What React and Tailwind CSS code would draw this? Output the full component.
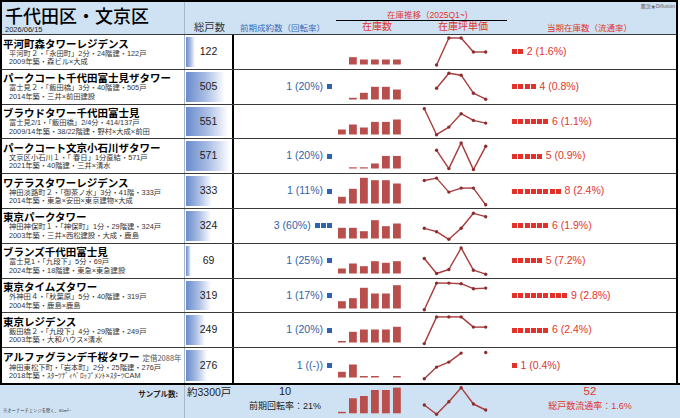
import React from 'react';

const F = "font-['Liberation_Sans','Noto_Sans_CJK_JP',sans-serif]";

const rows = [
  { name: '平河町森タワーレジデンス', l1: '平河町２・「永田町」2分・24階建・122戸', l2: '2009年築・森ビル×大成', total: 122, sold: null, bars: [null, 7.3, 5, 5, 5, 5], line: [null, 30, 3, 3, 17, 17], cur: 2, pct: '1.6%' },
  { name: 'パークコート千代田富士見ザタワー', l1: '富士見２・「飯田橋」3分・40階建・505戸', l2: '2014年築・三井×前田建設', total: 505, sold: ['1 (20%)', 1], bars: [null, 1.7, 6.7, 12.7, 12.7, 10], line: [null, 18.2, 3.2, 5.2, 23.2, 29.2], cur: 4, pct: '0.8%' },
  { name: 'ブラウドタワー千代田富士見', l1: '富士見2/1・「飯田橋」2/4分・414/137戸', l2: '2009/14年築・38/22階建・野村×大成×前田', total: 551, sold: null, bars: [5, 10, 7, 12.6, 12.6, 15], line: [3.7, 29.7, 22.1, 8.7, 15.4, 18.1], cur: 6, pct: '1.1%' },
  { name: 'パークコート文京小石川ザタワー', l1: '文京区小石川１・「 春日」1分直結・571戸', l2: '2021年築・40階建・三井×清水', total: 571, sold: ['1 (20%)', 1], bars: [null, 1.2, 1.2, 5, 12.6, 12.6], line: [null, 11.3, 29.6, 3.9, 30.6, 7.3], cur: 5, pct: '0.9%' },
  { name: 'ワテラスタワーレジデンス', l1: '神田淡路町２・「御茶ノ水」3分・41階・333戸', l2: '2014年築・東急×安田×東京建物×大成', total: 333, sold: ['1 (11%)', 1], bars: [6.7, 14.7, 25.7, 23.3, 23.3, 20], line: [6.5, 4.1, 18.1, 14.1, 14.1, 30.8], cur: 8, pct: '2.4%' },
  { name: '東京パークタワー', l1: '神田神保町１・「神保町」1分・29階建・324戸', l2: '2003年築・三井×西松建設・大成・鹿島', total: 324, sold: ['3 (60%)', 3], bars: [10.7, 10.7, 7.3, 18.3, 12.3, 15], line: [19.3, 22.7, 30.3, 19.3, 4.3, 7.7], cur: 6, pct: '1.9%' },
  { name: 'ブランズ千代田富士見', l1: '富士見1・「九段下」5分・69戸', l2: '2024年築・18階建・東急×東急建設', total: 69, sold: ['1 (25%)', 1], bars: [5, 10, 7.3, 12.3, 10.7, 12.3], line: [14.5, 29.5, 25.5, 3.9, 26.2, 30.2], cur: 5, pct: '7.2%' },
  { name: '東京タイムズタワー', l1: '外神田４・「秋葉原」5分・40階建・319戸', l2: '2004年築・鹿島×鹿島', total: 319, sold: ['1 (17%)', 1], bars: [7.3, 10.3, 20.7, 15, 15, 23.3], line: [30.7, 4.1, 4.1, 4.7, 9.7, 9.1], cur: 9, pct: '2.8%' },
  { name: '東京レジデンス', l1: '飯田橋２・「九段下」4分・29階建・249戸', l2: '2003年築・大和ハウス×清水', total: 249, sold: ['1 (20%)', 1], bars: [1.5, 10.7, 13, 13, 13, 15.7], line: [30.6, 3.9, 3.9, 3.9, 14.1, 14.1], cur: 6, pct: '2.4%' },
  { name: 'アルファグランデ千桜タワー', extra: '定借2088年', l1: '神田東松下町・「岩本町」2分・25階建・276戸', l2: '2018年築・ｽﾀｰﾂﾃﾞｨﾍﾞﾛｯﾌﾟﾒﾝﾄ×ｽﾀｰﾂCAM', total: 276, sold: ['1 ((-))', 1], bars: [5.7, 13, 1.5, 1.5, null, 1.5], line: [30.8, 19.1, 14.1, 5.1, null, 4.5], cur: 1, pct: '0.4%' },
];

function Bars({ data, base, h }) {
  return (
    <svg width="74" height={h} className="block">
      {data.map((v, i) =>
        v == null ? null : (
          <rect key={i} x={2 + i * 11} y={base - v} width="7.8" height={v} fill="#b94f4c" />
        )
      )}
    </svg>
  );
}

function Line({ data, h }) {
  const xs = data.map((_, i) => 14.3 + i * 12.28);
  const segs = [];
  for (let i = 0; i < data.length - 1; i++) {
    if (data[i] != null && data[i + 1] != null) {
      segs.push(<line key={'l' + i} x1={xs[i]} y1={data[i]} x2={xs[i + 1]} y2={data[i + 1]} stroke="#a83c3c" strokeWidth="1.4" />);
    }
  }
  return (
    <svg width="90" height={h} className="block">
      {segs}
      {data.map((v, i) => (v == null ? null : <circle key={i} cx={xs[i]} cy={v} r="1.7" fill="#8c2e2e" />))}
    </svg>
  );
}

function Squares({ n, color, gap }) {
  return (
    <div className={`flex ${gap}`}>
      {Array.from({ length: n }).map((_, i) => (
        <div key={i} className={`w-[5px] h-[5px] ${color}`} />
      ))}
    </div>
  );
}

function Row({ r, last }) {
  return (
    <div className={`flex h-[34.8px] ${last ? '' : 'border-b border-[#3a3a3a]'}`}>
      <div className="w-[182px] pl-[1px] pt-[1.5px] overflow-hidden">
        <div className="flex items-baseline font-['Noto_Sans_CJK_JP',sans-serif] font-bold text-[10.5px] leading-[13px] text-black whitespace-nowrap">
          {r.name}
          {r.extra && <span className="ml-[3px] text-[7.5px] font-normal text-[#555]">{r.extra}</span>}
        </div>
        <div className={`${F} pl-[6px] text-[7.3px] leading-[8.5px] text-[#333] whitespace-nowrap`}>{r.l1}</div>
        <div className={`${F} pl-[6px] text-[7.3px] leading-[8.5px] text-[#333] whitespace-nowrap`}>{r.l2}</div>
      </div>
      <div className="relative w-[50px] border-l border-r-2 border-l-[#a9b6c8] border-r-black">
        <div
          className="absolute left-[1px] top-[2px] bottom-[2px] bg-gradient-to-r from-[#6a8bcb] via-[#a9bde4] to-white"
          style={{ width: `${(r.total / 571) * 44}px` }}
        />
        <div className={`relative flex h-full items-center justify-center ${F} text-[10.5px] text-[#222]`}>{r.total}</div>
      </div>
      <div className={`w-[102px] flex items-center justify-end gap-[4px] pr-[4px] ${F} text-[10.5px] text-[#2f5fa8]`}>
        {r.sold && (
          <>
            <span>{r.sold[0]}</span>
            <Squares n={r.sold[1]} color="bg-[#2f62b2]" gap="gap-[1.2px]" />
          </>
        )}
      </div>
      <div className="w-[74px]">
        <Bars data={r.bars} base={29.5} h={33.8} />
      </div>
      <div className="w-[90px]">
        <Line data={r.line} h={33.8} />
      </div>
      <div className={`flex-1 flex items-center pl-[12px] ${F} text-[10.5px] text-[#e0352d]`}>
        <Squares n={r.cur} color="bg-[#e2312b]" gap="gap-[1.3px]" />
        <span className="ml-[3.5px]">
          {r.cur} ({r.pct})
        </span>
      </div>
    </div>
  );
}

export default function App() {
  return (
    <div className={`w-[680px] h-[418px] bg-white overflow-hidden ${F}`}>
      <div className="w-[678px] border-l-2 border-r-2 border-t-2 border-black">
        <div className="flex h-[33px] bg-[#cfe2f3] border-b border-[#3a3a3a]">
          <div className="w-[182px] flex flex-col pl-[3px] pt-[3.5px]">
            <div className="font-['Noto_Sans_CJK_JP',sans-serif] font-medium text-[18px] leading-[18px] text-black">千代田区・文京区</div>
            <div className="mt-[2px] text-[7.5px] leading-[8px] text-[#222]">2026/06/15</div>
          </div>
          <div className="w-[50px] border-l border-[#a9b6c8] flex items-end justify-center pb-[0.5px]">
            <span className="text-[10.3px] leading-[12px] text-[#333]">総戸数</span>
          </div>
          <div className="w-[102px] flex items-end pl-[6px] pb-[1.5px]">
            <span className="text-[8.5px] leading-[10px] text-[#3a6bb5]">前期成約数（回転率）</span>
          </div>
          <div className="w-[171px] flex flex-col pt-[8px]">
            <div className="pl-[51px] text-[8.5px] leading-[10px] text-[#e0352d] whitespace-nowrap">在庫推移（2025Q1~)</div>
            <div className="flex border-t border-black text-[10px] leading-[12px] text-[#e0352d]">
              <span className="ml-[26px]">在庫数</span>
              <span className="ml-[46px]">在庫坪単価</span>
            </div>
          </div>
          <div className="flex-1 flex flex-col">
            <div className="flex justify-end pr-[1px] pt-[1px] text-[5px] leading-[6px] text-[#666]">鷹説★Diffusion</div>
            <div className="flex-1 flex items-end pl-[40px] pb-[1.5px]">
              <span className="text-[8.5px] leading-[10px] text-[#e0352d]">当期在庫数（流通率）</span>
            </div>
          </div>
        </div>
        {rows.map((r, i) => (
          <Row key={i} r={r} last={i === rows.length - 1} />
        ))}
      </div>
      <div className="flex h-[35px] w-[680px] bg-[#cfe2f3] border-t-2 border-black">
        <div className="w-[184px] flex flex-col">
          <div className="flex justify-end pr-[6px] pt-[4px] font-['Noto_Sans_CJK_JP',sans-serif] font-bold text-[7.5px] leading-[9px] text-[#222]">サンプル数:</div>
          <div className="mt-auto pb-[5px] pl-[3px] text-[4.3px] leading-[5px] text-[#333] whitespace-nowrap">※オーナーチェンジを除く、40m²~</div>
        </div>
        <div className="w-[50px] flex items-start border-l border-[#a9b6c8] pl-[2px] pt-[1px] text-[10.5px] leading-[13px] text-[#222] whitespace-nowrap">
          約3300戸
        </div>
        <div className="w-[102px] flex flex-col items-center">
          <div className="text-[11px] leading-[13px] pt-[0.5px] text-[#222]">10</div>
          <div className="mt-[3px] text-[9px] leading-[11px] text-[#222] whitespace-nowrap">前期回転率：21%</div>
        </div>
        <div className="w-[74px]">
          <Bars data={[1.5, 15, 17.3, 23.3, 23.3, 25.7]} base={28.3} h={33} />
        </div>
        <div className="w-[90px]">
          <Line data={[20, 29.3, 16.7, 2.7, 19, 25]} h={33} />
        </div>
        <div className="flex-1 flex flex-col items-center text-[#e0352d]">
          <div className="text-[11.5px] leading-[13px] pt-[0.5px]">52</div>
          <div className="mt-[3px] text-[9px] leading-[11px] whitespace-nowrap">総戸数流通率：1.6%</div>
        </div>
      </div>
    </div>
  );
}
